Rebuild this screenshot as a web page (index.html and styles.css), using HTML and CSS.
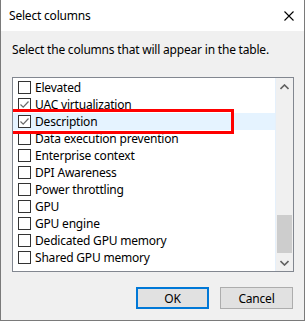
FILE: index.html
```html
<!DOCTYPE html>
<html>
<head>
<meta charset="utf-8">
<link rel="stylesheet" href="styles.css">
</head>
<body>
<div class="window">
  <div class="titlebar">
    <span class="title">Select columns</span>
    <svg class="close" width="10" height="10" viewBox="0 0 10 10"><path d="M0.5 0.5 L9.5 9.5 M9.5 0.5 L0.5 9.5" stroke="#000" stroke-width="1.1" fill="none"/></svg>
  </div>
  <div class="body">
    <p class="prompt">Select the columns that will appear in the table.</p>
    <div class="listbox">
      <ul class="items">
        <li class="item"><span class="cb"></span>Elevated</li>
        <li class="item"><span class="cb checked"><svg width="11" height="11" viewBox="0 0 11 11"><path d="M1.5 5.5 L4.2 8.2 L9.5 2.5" stroke="#6b6b6b" stroke-width="1.2" fill="none"/></svg></span>UAC virtualization</li>
        <li class="item selected"><span class="cb checked"><svg width="11" height="11" viewBox="0 0 11 11"><path d="M1.5 5.5 L4.2 8.2 L9.5 2.5" stroke="#6b6b6b" stroke-width="1.2" fill="none"/></svg></span>Description</li>
        <li class="item"><span class="cb"></span>Data execution prevention</li>
        <li class="item"><span class="cb"></span>Enterprise context</li>
        <li class="item"><span class="cb"></span>DPI Awareness</li>
        <li class="item"><span class="cb"></span>Power throttling</li>
        <li class="item"><span class="cb"></span>GPU</li>
        <li class="item"><span class="cb"></span>GPU engine</li>
        <li class="item"><span class="cb"></span>Dedicated GPU memory</li>
        <li class="item"><span class="cb"></span>Shared GPU memory</li>
      </ul>
      <div class="scrollbar">
        <div class="arrow"><svg width="9" height="6" viewBox="0 0 9 6"><path d="M0.5 5 L4.5 1 L8.5 5" stroke="#606060" stroke-width="1.6" fill="none"/></svg></div>
        <div class="track"><div class="thumb"></div></div>
        <div class="arrow"><svg width="9" height="6" viewBox="0 0 9 6"><path d="M0.5 1 L4.5 5 L8.5 1" stroke="#606060" stroke-width="1.6" fill="none"/></svg></div>
      </div>
      <div class="highlight"></div>
    </div>
    <div class="buttons">
      <button class="btn default">OK</button>
      <button class="btn">Cancel</button>
    </div>
  </div>
</div>
</body>
</html>
```
FILE: styles.css
```css
* { box-sizing: border-box; }
html, body { margin: 0; padding: 0; }
body {
  width: 305px;
  height: 321px;
  font-family: "Noto Sans", "DejaVu Sans", sans-serif;
  font-size: 12px;
  letter-spacing: -0.2px;
  color: #000;
  background: #f0f0f0;
}
.window {
  width: 305px;
  height: 321px;
  background: #f0f0f0;
  border: 1px solid #7a7a7a;
  border-top: none;
  display: flex;
  flex-direction: column;
}
.titlebar {
  height: 31px;
  background: #fff;
  display: flex;
  align-items: center;
  justify-content: space-between;
  padding: 0 10px 0 8px;
  flex: none;
}
.title { font-size: 12px; line-height: 16px; margin-top: 1px; }
.close { display: block; margin-top: 1px; }
.body {
  flex: 1;
  display: flex;
  flex-direction: column;
  padding: 0 11px 0 11px;
}
.prompt {
  margin: 11px 0 0 0;
  line-height: 16px;
  height: 16px;
}
.listbox {
  position: relative;
  margin-top: 19px;
  width: 282px;
  height: 195px;
  border: 1px solid #828790;
  background: #fff;
  display: flex;
  overflow: hidden;
}
.items {
  list-style: none;
  margin: 0;
  padding: 1px 0 0 0;
  flex: 1;
  border-right: 1px solid #e5f0fb;
}
.item {
  height: 17px;
  display: flex;
  align-items: center;
  padding-left: 5px;
  gap: 4px;
  white-space: nowrap;
  line-height: 17px;
}
.item.selected { background: #e5f3ff; }
.cb {
  width: 13px;
  height: 13px;
  border: 1px solid #333;
  background: #fff;
  flex: none;
  display: flex;
  align-items: center;
  justify-content: center;
}
.cb svg { display: block; }
.scrollbar {
  width: 17px;
  flex: none;
  background: #f0f0f0;
  display: flex;
  flex-direction: column;
}
.arrow {
  height: 17px;
  display: flex;
  align-items: center;
  justify-content: center;
  flex: none;
}
.arrow svg { display: block; }
.track { flex: 1; position: relative; }
.thumb {
  position: absolute;
  left: 1px;
  right: 1px;
  top: 120px;
  height: 38px;
  background: #cdcdcd;
}
.highlight {
  position: absolute;
  left: -6px;
  top: 31px;
  width: 227px;
  height: 25px;
  border: 3px solid #ff0000;
  pointer-events: none;
}
.buttons {
  display: flex;
  justify-content: flex-end;
  gap: 11px;
  margin-top: 15px;
}
.btn {
  width: 73px;
  height: 22px;
  font-family: inherit;
  font-size: 12px;
  letter-spacing: inherit;
  background: #e1e1e1;
  border: 1px solid #adadad;
  padding: 0;
  color: #000;
}
.btn.default { border: 2px solid #0078d7; }
```
